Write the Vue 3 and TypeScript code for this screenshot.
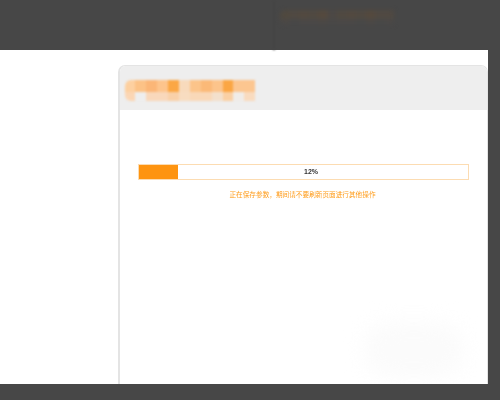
<script setup lang="ts">
const titleTop: string[] = ['#fdd0a0', '#fcc286', '#fbb677', '#fdc48c', '#fba744', '#f8dabc', '#fcc48a', '#fbb978', '#fcc48b', '#fba644', '#fcc690', '#fcc690']
const titleBottom: string[] = ['#fbd6b4', '#eeeeee', '#f9d8bb', '#f9d8bb', '#f9d0a8', '#f8dcc0', '#f9d8b8', '#f9d8b8', '#f3e0cc', '#fad0a4', '#f0ece8', '#f9dbbf']
const hintTop: string[] = ['#50493f', '#504942', '#524940', '#504941', '#54493e', '#4c4845', '#504941', '#524940', '#504941', '#54493e', '#504942', '#504942']
const hintBottom: string[] = ['#4b4846', '#474747', '#4a4847', '#4a4847', '#4b4846', '#494847', '#4a4847', '#4a4847', '#484847', '#4b4846', '#484847', '#4a4847']
const progress = 12
</script>

<template>
  <div class="page">
    <header class="top">
      <div class="top-rule"></div>
      <div class="mosaic mosaic-hint">
        <div class="row row-a">
          <span v-for="(c, i) in hintTop" :key="i" class="cell cell-hint" :style="{ background: c }"></span>
        </div>
        <div class="row row-b">
          <span v-for="(c, i) in hintBottom" :key="i" class="cell cell-hint" :style="{ background: c }"></span>
        </div>
      </div>
    </header>

    <main class="main">
      <section class="card">
        <div class="card-head">
          <div class="mosaic">
            <div class="row row-a">
              <span v-for="(c, i) in titleTop" :key="i" class="cell" :style="{ background: c }"></span>
            </div>
            <div class="row row-b">
              <span v-for="(c, i) in titleBottom" :key="i" class="cell" :style="{ background: c }"></span>
            </div>
          </div>
        </div>
        <div class="card-body">
          <div class="bar">
            <div class="fill" :style="{ width: progress + '%' }"></div>
            <span class="pct">{{ progress }}%</span>
          </div>
          <p class="note">正在保存参数，期间请不要刷新页面进行其他操作</p>
        </div>
        <div class="smudge"></div>
      </section>
    </main>

    <div class="bottom"></div>
  </div>
</template>

<style>
html,
body {
  margin: 0;
  background: #474747;
}
</style>

<style scoped>
.page {
  width: 500px;
  height: 400px;
  display: flex;
  flex-direction: column;
  background: #474747;
  overflow: hidden;
  font-family: "Noto Sans CJK SC", "Liberation Sans", sans-serif;
}

.top {
  height: 50px;
  display: flex;
  align-items: flex-start;
  flex: none;
}

.top-rule {
  width: 2px;
  height: 50px;
  margin-left: 273px;
  background: #454545;
  filter: blur(0.8px);
}

.mosaic {
  display: flex;
  flex-direction: column;
  filter: blur(0.8px);
}

.mosaic-hint {
  margin: 10px 0 0 5px;
  filter: blur(2px);
}

.row {
  display: flex;
}

.row-a {
  height: 12px;
}

.row-b {
  height: 9px;
}

.cell {
  width: 10.9px;
  height: 100%;
}

.row-a .cell:first-child {
  border-top-left-radius: 6px;
}

.row-b .cell:first-child {
  border-bottom-left-radius: 6px;
}

.cell-hint {
  width: 9.5px;
}

.mosaic-hint .row-a {
  height: 9px;
}

.mosaic-hint .row-b {
  height: 6px;
}

.main {
  height: 334px;
  width: 488px;
  flex: none;
  background: #ffffff;
  padding: 15px 0 0 117.5px;
  box-sizing: border-box;
  overflow: hidden;
}

.card {
  position: relative;
  width: 370.5px;
  height: 340px;
  box-sizing: border-box;
  background: #ffffff;
  border: solid #e4e4e4;
  border-width: 1.5px 1.5px 0 2.5px;
  border-radius: 7px 7px 0 0;
  overflow: hidden;
}

.card-head {
  height: 43.5px;
  background: #eeeeee;
  padding-top: 14px;
  box-sizing: border-box;
  padding-left: 5px;
}

.card-body {
  padding: 54px 18.5px 0 18px;
}

.bar {
  position: relative;
  height: 16px;
  box-sizing: border-box;
  border: 1px solid #fcdcb2;
  padding-left: 16px;
  display: flex;
  align-items: center;
  justify-content: center;
  filter: blur(0.45px);
}

.fill {
  position: absolute;
  left: 0;
  top: 0;
  bottom: 0;
  background: #fe9410;
}

.pct {
  position: relative;
  font-family: "Liberation Sans", sans-serif;
  font-size: 7px;
  font-weight: 700;
  color: #333333;
}

.note {
  margin: 7px 0 0;
  padding-right: 1px;
  text-align: center;
  font-size: 6.65px;
  line-height: 14px;
  color: #ff9c1a;
  filter: blur(0.45px);
}

.smudge {
  position: absolute;
  left: 244px;
  top: 256px;
  width: 100px;
  height: 56px;
  border-radius: 28px;
  background: #fbfbfb;
  filter: blur(10px);
}

.bottom {
  height: 16px;
  flex: none;
}
</style>
